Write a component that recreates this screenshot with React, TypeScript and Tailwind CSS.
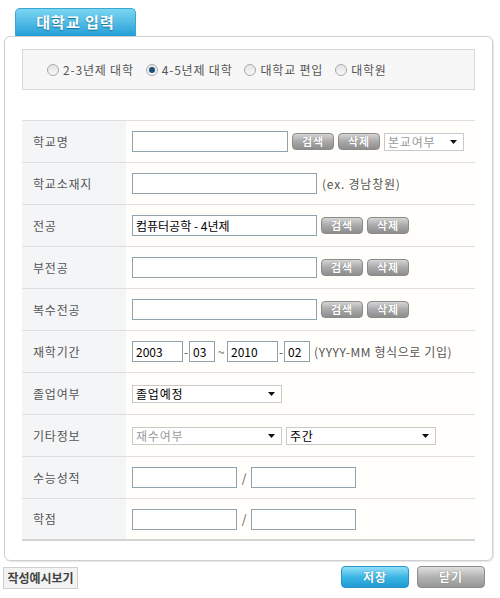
import type { ReactNode } from 'react';

const font = { fontFamily: '"Noto Sans CJK KR", "Liberation Sans", sans-serif' };

function GrayBtn({ label }: { label: string }) {
  return (
    <span className="inline-flex h-[17px] w-[42px] items-center justify-center rounded-[4px] border border-[#8a8a8a] bg-gradient-to-b from-[#d6d6d6] via-[#a9a9a9] to-[#8e8e8e] text-[11px] font-bold leading-none tracking-[1px] text-white [text-shadow:0_0_1px_#666]">
      {label}
    </span>
  );
}

function TextInput({ w, value }: { w: string; value?: string }) {
  return (
    <span className={`inline-flex h-[21px] items-center border border-[#8fa3ad] bg-white px-[3px] text-[12px] text-black ${w}`}>
      {value}
    </span>
  );
}

function Select({ w, value, muted }: { w: string; value: string; muted?: boolean }) {
  return (
    <span className={`inline-flex h-[18px] items-center justify-between border border-[#c9c9c9] bg-white pl-[3px] pr-[6px] text-[12px] tracking-[0.8px] ${muted ? 'text-[#9a9a9a]' : 'text-black'} ${w}`}>
      {value}
      <svg width="7" height="4" viewBox="0 0 7 4">
        <path d="M0 0h7L3.5 4z" fill="#111" />
      </svg>
    </span>
  );
}

function Row({ label, children, last }: { label: string; children: ReactNode; last?: boolean }) {
  return (
    <div className={`flex h-[42px] ${last ? 'border-b-2 border-[#d4d4d4]' : 'border-b border-[#dedede]'}`}>
      <div className="flex w-[104px] items-center bg-[#f4f5f7] pl-[11px] text-[12px] tracking-[0.8px] text-[#555]">{label}</div>
      <div className="flex flex-1 items-center gap-[4px] bg-[#fffefb] pl-[6px] text-[12px] text-[#555]">{children}</div>
    </div>
  );
}

function Radio({ label, checked }: { label: string; checked?: boolean }) {
  return (
    <span className="inline-flex items-center gap-[4px]">
      <span className="flex h-[12px] w-[12px] items-center justify-center rounded-full border border-[#a9a9a9] bg-gradient-to-b from-[#e4e4e4] to-[#f8f8f8]">
        {checked && <span className="h-[6px] w-[6px] rounded-full bg-[#1f4e78]" />}
      </span>
      <span className="tracking-[0.8px]">{label}</span>
    </span>
  );
}

export default function App() {
  return (
    <div className="h-[598px] w-[500px] bg-white" style={font}>
      <div className="pl-[15px] pt-[8px]">
        <div className="flex h-[28px] w-[121px] items-center justify-center rounded-t-[5px] border border-b-0 border-[#3aa6d2] bg-gradient-to-b from-[#7ad6f2] to-[#1b9fd7] text-[15px] font-bold tracking-[1px] text-white [text-shadow:0_1px_1px_#1a6f95]">
          대학교 입력
        </div>
      </div>

      <div className="ml-[4px] w-[489px] rounded-[6px] border border-[#cfcfcf] px-[17px] pb-[19px] pt-[12px] shadow-[1px_1px_1px_#e6e6e6]">
        <div className="flex h-[41px] items-center gap-[12px] border border-[#d8d8d8] bg-[#f7f7f7] pl-[24px] text-[12px] text-[#555]">
          <Radio label="2-3년제 대학" />
          <Radio label="4-5년제 대학" checked />
          <Radio label="대학교 편입" />
          <Radio label="대학원" />
        </div>

        <div className="mt-[30px] border-t border-[#dedede]">
          <Row label="학교명">
            <TextInput w="w-[156px]" />
            <GrayBtn label="검색" />
            <GrayBtn label="삭제" />
            <Select w="w-[80px]" value="본교여부" muted />
          </Row>
          <Row label="학교소재지">
            <TextInput w="w-[185px]" />
            <span className="ml-[1px] tracking-[0.8px]">(ex. 경남창원)</span>
          </Row>
          <Row label="전공">
            <TextInput w="w-[185px]" value="컴퓨터공학 - 4년제" />
            <GrayBtn label="검색" />
            <GrayBtn label="삭제" />
          </Row>
          <Row label="부전공">
            <TextInput w="w-[185px]" />
            <GrayBtn label="검색" />
            <GrayBtn label="삭제" />
          </Row>
          <Row label="복수전공">
            <TextInput w="w-[185px]" />
            <GrayBtn label="검색" />
            <GrayBtn label="삭제" />
          </Row>
          <Row label="재학기간">
            <div className="flex items-center gap-0">
              <TextInput w="w-[51px]" value="2003" />
              <span className="w-[6px] text-center">-</span>
              <TextInput w="w-[26px]" value="03" />
              <span className="w-[12px] text-center">~</span>
              <TextInput w="w-[51px]" value="2010" />
              <span className="w-[6px] text-center">-</span>
              <TextInput w="w-[26px]" value="02" />
              <span className="ml-[4px] tracking-[0.6px]">(YYYY-MM 형식으로 기입)</span>
            </div>
          </Row>
          <Row label="졸업여부">
            <Select w="w-[150px]" value="졸업예정" />
          </Row>
          <Row label="기타정보">
            <Select w="w-[150px]" value="재수여부" muted />
            <Select w="w-[150px]" value="주간" />
          </Row>
          <Row label="수능성적">
            <TextInput w="w-[105px]" />
            <span className="w-[6px] text-center">/</span>
            <TextInput w="w-[105px]" />
          </Row>
          <Row label="학점" last>
            <TextInput w="w-[105px]" />
            <span className="w-[6px] text-center">/</span>
            <TextInput w="w-[105px]" />
          </Row>
        </div>
      </div>

      <div className="mt-[5px] flex items-start justify-between pl-[3px] pr-[15px]">
        <span className="mt-[1px] inline-flex h-[22px] w-[75px] items-center justify-center border border-[#cfcfcf] bg-[#f3f3f3] text-[12px] font-bold text-[#444]">
          작성예시보기
        </span>
        <div className="flex gap-[8px]">
          <span className="inline-flex h-[22px] w-[68px] items-center justify-center rounded-[4px] border border-[#2a95c4] bg-gradient-to-b from-[#8fe0f8] via-[#3cb6e4] to-[#1d9bd3] text-[12px] font-bold tracking-[1px] text-white [text-shadow:0_0_1px_#1a6f95]">
            저장
          </span>
          <span className="inline-flex h-[22px] w-[68px] items-center justify-center rounded-[4px] border border-[#8c8c8c] bg-gradient-to-b from-[#e0e0e0] via-[#b2b2b2] to-[#979797] text-[12px] font-bold tracking-[1px] text-white [text-shadow:0_0_1px_#666]">
            닫기
          </span>
        </div>
      </div>
    </div>
  );
}
